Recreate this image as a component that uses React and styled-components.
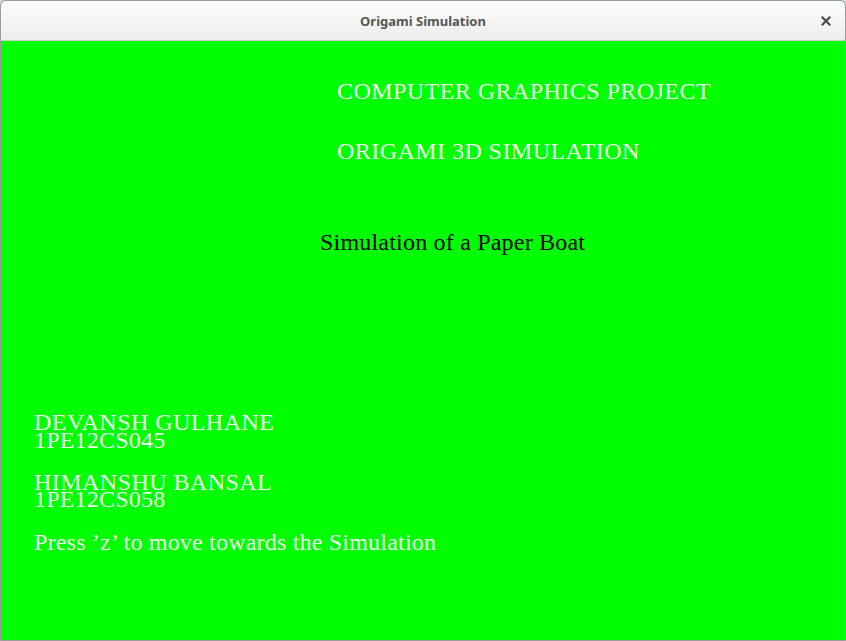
import React from 'react';
import styled, { createGlobalStyle } from 'styled-components';

const GlobalStyle = createGlobalStyle`
  html, body {
    margin: 0;
    padding: 0;
    background: #d6d6d6;
  }
`;

const Window = styled.div`
  width: 846px;
  height: 641px;
  box-sizing: border-box;
  border: 1px solid #9c9c9c;
  border-radius: 6px 6px 0 0;
  display: flex;
  flex-direction: column;
  overflow: hidden;
  background: #00ff00;
`;

const TitleBar = styled.div`
  height: 39px;
  flex: 0 0 39px;
  position: relative;
  display: flex;
  align-items: center;
  justify-content: center;
  background: linear-gradient(#fdfdfd, #ededed);
  border-bottom: 1px solid #cfcfcf;
`;

const Title = styled.span`
  font-family: "Noto Sans", "DejaVu Sans", sans-serif;
  font-weight: 700;
  font-size: 13px;
  color: #555753;
`;

const CloseButton = styled.button`
  position: absolute;
  right: 12px;
  top: 13px;
  width: 14px;
  height: 14px;
  padding: 0;
  border: none;
  background: none;
  display: flex;
  align-items: center;
  justify-content: center;
`;

const Canvas = styled.div`
  flex: 1;
  background: #00ff00;
  font-family: "Liberation Serif", "Times New Roman", serif;
  font-size: 24px;
  display: flex;
  flex-direction: column;
`;

const Line = styled.div`
  line-height: 24px;
  height: 24px;
  white-space: nowrap;
  margin-top: ${p => p.top}px;
  padding-left: ${p => p.left}px;
  letter-spacing: ${p => (p.caps ? '0.45px' : '0.2px')};
  color: ${p => (p.dark ? '#000000' : '#f0fff0')};
`;

const Credits = styled.div`
  display: flex;
  flex-direction: column;
`;

const CloseIcon = () => (
  <svg width="10" height="10" viewBox="0 0 10 10">
    <path d="M1.5 1.5 L8.5 8.5 M8.5 1.5 L1.5 8.5" stroke="#4a4a4a" strokeWidth="2.2" strokeLinecap="square" />
  </svg>
);

const App = () => (
  <>
    <GlobalStyle />
    <Window>
      <TitleBar>
        <Title>Origami Simulation</Title>
        <CloseButton aria-label="Close">
          <CloseIcon />
        </CloseButton>
      </TitleBar>
      <Canvas>
        <Line top={38} left={336} caps>COMPUTER GRAPHICS PROJECT</Line>
        <Line top={36} left={336} caps>ORIGAMI 3D SIMULATION</Line>
        <Line top={67} left={319} dark>Simulation of a Paper Boat</Line>
        <Credits>
          <Line top={156} left={33} caps>DEVANSH GULHANE</Line>
          <Line top={-6.5} left={33}>1PE12CS045</Line>
          <Line top={18} left={33} caps>HIMANSHU BANSAL</Line>
          <Line top={-7} left={33}>1PE12CS058</Line>
          <Line top={19} left={33}>Press ’z’ to move towards the Simulation</Line>
        </Credits>
      </Canvas>
    </Window>
  </>
);

export default App;
